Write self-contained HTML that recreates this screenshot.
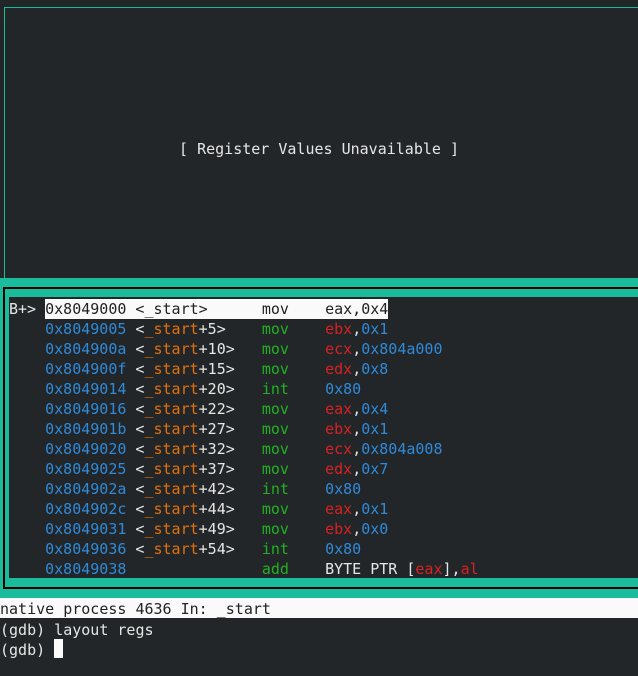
<!DOCTYPE html>
<html><head><meta charset="utf-8"><style>
html,body{margin:0;padding:0}
body{width:638px;height:676px;background:#232629;position:relative;overflow:hidden;font-family:"DejaVu Sans Mono","Liberation Mono",monospace;font-size:15px;color:#e6e6e6}
.abs{position:absolute}
pre{margin:0;font:inherit;line-height:20px;white-space:pre}
.b{color:#2f8ad8}.o{color:#e0700f}.g{color:#22b022}.r{color:#d62222}
.hl{background:#fafafa;color:#222;display:inline-block;line-height:20px;height:20px;vertical-align:top}
</style></head><body>
<div class="abs" style="left:4px;top:7px;width:640px;height:280px;border-left:1px solid #1abc9c;border-top:1px solid #1abc9c"></div>
<div class="abs" style="left:0;top:149px;width:638px;text-align:center;line-height:1px"><span style="position:relative;left:0">[ Register Values Unavailable ]</span></div>
<div class="abs" style="left:0;top:278px;width:638px;height:320px;background:#1abc9c"></div>
<div class="abs" style="left:3px;top:287px;width:640px;height:302px;background:#000"></div>
<div class="abs" style="left:5px;top:289px;width:640px;height:298px;background:#1abc9c"></div>
<div class="abs" style="left:9px;top:297px;width:640px;height:281px;background:#232629"></div>
<pre class="abs" style="left:9px;top:299px">B+> <span class="hl">0x8049000 &lt;_start&gt;      mov    eax,0x4</span>
    <span class="b">0x8049005</span> &lt;<span class="o">_start</span>+5&gt;    <span class="g">mov</span>    <span class="r">ebx</span>,<span class="b">0x1</span>
    <span class="b">0x804900a</span> &lt;<span class="o">_start</span>+10&gt;   <span class="g">mov</span>    <span class="r">ecx</span>,<span class="b">0x804a000</span>
    <span class="b">0x804900f</span> &lt;<span class="o">_start</span>+15&gt;   <span class="g">mov</span>    <span class="r">edx</span>,<span class="b">0x8</span>
    <span class="b">0x8049014</span> &lt;<span class="o">_start</span>+20&gt;   <span class="g">int</span>    <span class="b">0x80</span>
    <span class="b">0x8049016</span> &lt;<span class="o">_start</span>+22&gt;   <span class="g">mov</span>    <span class="r">eax</span>,<span class="b">0x4</span>
    <span class="b">0x804901b</span> &lt;<span class="o">_start</span>+27&gt;   <span class="g">mov</span>    <span class="r">ebx</span>,<span class="b">0x1</span>
    <span class="b">0x8049020</span> &lt;<span class="o">_start</span>+32&gt;   <span class="g">mov</span>    <span class="r">ecx</span>,<span class="b">0x804a008</span>
    <span class="b">0x8049025</span> &lt;<span class="o">_start</span>+37&gt;   <span class="g">mov</span>    <span class="r">edx</span>,<span class="b">0x7</span>
    <span class="b">0x804902a</span> &lt;<span class="o">_start</span>+42&gt;   <span class="g">int</span>    <span class="b">0x80</span>
    <span class="b">0x804902c</span> &lt;<span class="o">_start</span>+44&gt;   <span class="g">mov</span>    <span class="r">eax</span>,<span class="b">0x1</span>
    <span class="b">0x8049031</span> &lt;<span class="o">_start</span>+49&gt;   <span class="g">mov</span>    <span class="r">ebx</span>,<span class="b">0x0</span>
    <span class="b">0x8049036</span> &lt;<span class="o">_start</span>+54&gt;   <span class="g">int</span>    <span class="b">0x80</span>
    <span class="b">0x8049038</span>               <span class="g">add</span>    BYTE PTR [<span class="r">eax</span>],<span class="r">al</span></pre>
<div class="abs" style="left:0;top:598px;width:638px;height:20px;background:#fafafa"></div>
<pre class="abs" style="left:0;top:599px;color:#222">native process 4636 In: _start</pre>
<pre class="abs" style="left:0;top:620px">(gdb) layout regs
(gdb) </pre>
<div class="abs" style="left:54px;top:639px;width:9px;height:19px;background:#fafafa"></div>
</body></html>
